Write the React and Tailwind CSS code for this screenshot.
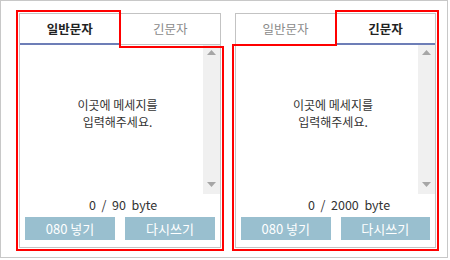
const KR = { fontFamily: '"Noto Sans CJK KR", "Noto Sans", sans-serif' }

function Arrow({ up }) {
  return (
    <svg width="9" height="5" viewBox="0 0 9 5" className="block">
      <path d={up ? 'M0 5 L4.5 0 L9 5 Z' : 'M0 0 L9 0 L4.5 5 Z'} fill="#a6a6a6" />
    </svg>
  )
}

function SmsPanel({ long, max, counterIndent, width }) {
  const tabs = [
    { label: '일반문자', active: !long },
    { label: '긴문자', active: long },
  ]

  return (
    <div className={`${width} h-[235px] border border-[#c3c3c3] bg-white flex flex-col`}>
      {/* tabs */}
      <div className="flex h-[31px]">
        {tabs.map((t, i) => (
          <div
            key={t.label}
            className={`flex-1 flex items-center justify-center text-[12.5px] ${
              t.active
                ? 'font-bold text-[#222] border-b-[2px] border-[#6d7eb7] pt-[1px]'
                : `text-[#8a8a8a] border-b border-[#c3c3c3] ${i === 1 ? 'border-l' : 'border-r'}`
            }`}
          >
            {t.label}
          </div>
        ))}
      </div>

      {/* message box */}
      <div className="flex h-[149px]">
        <div className="flex-1 pt-[51px] pl-[12px] text-center text-[12px] leading-[17px] text-[#333]">
          이곳에 메세지를
          <br />
          입력해주세요.
        </div>
        <div className="w-[17px] bg-[#f0f0f0] flex flex-col items-center justify-between pt-[5px] pb-[7px]">
          <Arrow up />
          <Arrow />
        </div>
      </div>

      {/* byte counter */}
      <div className={`h-[23px] flex items-center text-[12.5px] text-[#333] ${counterIndent}`}>
        <span className="whitespace-pre">0  /  {max}  byte</span>
      </div>

      {/* buttons */}
      <div className="flex gap-[10px] px-[5px]">
        <button className="w-[90px] h-[23px] bg-[#99bfcf] text-white text-[13px] flex items-center justify-center">
          080 넣기
        </button>
        <button className="w-[90px] h-[23px] bg-[#99bfcf] text-white text-[13px] flex items-center justify-center">
          다시쓰기
        </button>
      </div>
    </div>
  )
}

export default function App() {
  return (
    <div className="relative w-[448px] h-[258px] border border-[#c8c8c8] bg-white" style={KR}>
      <div className="flex gap-[14px] pl-[18px] pt-[12px]">
        <SmsPanel max="90" counterIndent="pl-[69px]" width="w-[202px]" />
        <SmsPanel long max="2000" counterIndent="pl-[72px]" width="w-[201px]" />
      </div>

      {/* red highlight annotation */}
      <svg
        className="absolute -left-px -top-px pointer-events-none"
        width="450"
        height="260"
        viewBox="0 0 450 260"
      >
        <path d="M17 11 H120 V47 H223 V250 H17 Z" fill="none" stroke="#ff0000" strokeWidth="2" />
        <path d="M233 45 H336 V11 H438 V250 H233 Z" fill="none" stroke="#ff0000" strokeWidth="2" />
      </svg>
    </div>
  )
}
